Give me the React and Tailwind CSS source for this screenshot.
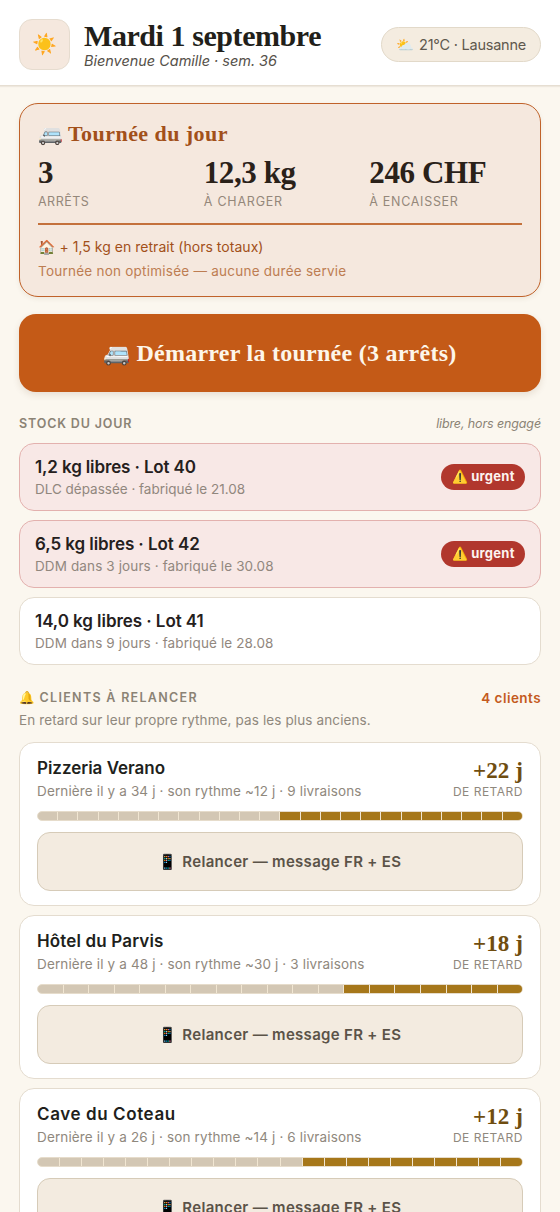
import React from "react";
import clsx from "clsx";

const stats = [
  { value: "3", label: "ARRÊTS", tracking: "tracking-[0.5px]" },
  { value: "12,3 kg", label: "À CHARGER", tracking: "tracking-[0.8px]" },
  { value: "246 CHF", label: "À ENCAISSER", tracking: "tracking-[0.7px]" },
];

const lots = [
  { title: "1,2 kg libres · Lot 40", detail: "DLC dépassée · fabriqué le 21.08", urgent: true, titleClass: "tracking-[-0.13px]", detailClass: "tracking-[-0.01px]" },
  { title: "6,5 kg libres · Lot 42", detail: "DDM dans 3 jours · fabriqué le 30.08", urgent: true, titleClass: "tracking-[-0.07px]", detailClass: "tracking-[0.12px]" },
  { title: "14,0 kg libres · Lot 41", detail: "DDM dans 9 jours · fabriqué le 28.08", urgent: false, titleClass: "tracking-[-0.06px]", detailClass: "tracking-[0.12px]" },
];

const clients = [
  { name: "Pizzeria Verano", last: 34, rhythm: 12, deliveries: 9, late: 22, onTimeCells: 12, lateCells: 12, nameClass: "tracking-[-0.02px]" },
  { name: "Hôtel du Parvis", last: 48, rhythm: 30, deliveries: 3, late: 18, onTimeCells: 12, lateCells: 7, nameClass: "tracking-[0.15px]" },
  { name: "Cave du Coteau", last: 26, rhythm: 14, deliveries: 6, late: 12, onTimeCells: 12, lateCells: 10, nameClass: "tracking-[0.6px]" },
];

const Header = () => (
  <header className="flex h-[86px] shrink-0 items-center justify-between border-b border-[#e6ded2] bg-white px-[19px] pt-[3px] shadow-[0_1px_1px_rgba(90,60,20,0.08)]">
    <div className="flex items-center gap-[14px]">
      <div className="flex size-[51px] items-center justify-center rounded-[13px] border border-[#e6dccf] bg-[#f5e8de] text-[20px]">☀️</div>
      <div className="flex flex-col pt-px">
        <h1 className="whitespace-nowrap font-['Liberation_Serif',serif] text-[30px] font-bold leading-[32px] tracking-[-0.43px] text-[#221f1a]">Mardi 1 septembre</h1>
        <p className="text-[14.5px] italic leading-[17px] tracking-[-0.03px] text-[#56514a]">Bienvenue Camille · sem. 36</p>
      </div>
    </div>
    <div className="flex h-[35px] w-[160px] items-center gap-[5px] whitespace-nowrap rounded-full border border-[#e2d9c9] bg-[#f4ece0] pl-[14px] pt-px text-[14.5px] text-[#5f584e]">
      <span>⛅</span>
      <span className="tracking-[-0.23px]">21°C · Lausanne</span>
    </div>
  </header>
);

const TourCard = () => (
  <section className="flex h-[194px] shrink-0 flex-col rounded-[19px] border border-[#c0622a] bg-[#f5e8de] px-[18px] pt-4 shadow-[0_2px_5px_rgba(90,60,20,0.08)]">
    <h2 className="flex items-center gap-[5px] font-['Liberation_Serif',serif] text-[22px] font-bold leading-7 text-[#a2501a]">
      <span className="text-[20px]">🚐</span>
      <span className="tracking-[0.45px]">Tournée du jour</span>
    </h2>
    <div className="mt-[9px] grid grid-cols-3 gap-[13px]">
      {stats.map((stat) => (
        <div key={stat.label}>
          <p className="font-['Liberation_Serif',serif] text-[31px] font-bold leading-8 tracking-[-0.39px] text-[#2a2119]">{stat.value}</p>
          <p className={clsx("mt-1 text-[12.5px] leading-[18px] text-[#94877a]", stat.tracking)}>{stat.label}</p>
        </div>
      ))}
    </div>
    <div className="mt-3 h-[2px] shrink-0 bg-[#c4713c]" />
    <p className="mt-[10px] flex items-center gap-1 text-[14px] leading-6 text-[#a2501a]">
      <span>🏠</span>
      <span className="tracking-[0.03px]">+ 1,5 kg en retrait (hors totaux)</span>
    </p>
    <p className="text-[13.5px] leading-6 tracking-[0.24px] text-[#bd7d52]">Tournée non optimisée — aucune durée servie</p>
  </section>
);

const LotCard = ({ lot }) => (
  <div className={clsx("flex h-[68px] items-center justify-between rounded-[15px] border px-[15px]", lot.urgent ? "border-[#e3b1ae] bg-[#f8e8e6]" : "border-[#e4dccf] bg-white")}>
    <div>
      <h3 className={clsx("pt-px text-[17px] font-semibold leading-[23px] text-[#25201d]", lot.titleClass)}>{lot.title}</h3>
      <p className={clsx("text-[13.5px] leading-5 text-[#91877e]", lot.detailClass)}>{lot.detail}</p>
    </div>
    {lot.urgent && (
      <span className="flex h-[26px] w-[84px] items-center gap-[3px] rounded-full bg-[#b1372d] pl-[11px] text-[13px] font-bold text-[#fdf3f0]">
        <span>⚠️</span>
        <span className="tracking-[0.27px]">urgent</span>
      </span>
    )}
  </div>
);

const RhythmBar = ({ onTimeCells, lateCells }) => (
  <div className="mt-[10px] flex h-[10px] gap-px overflow-hidden rounded-full border border-[#e6dccb] bg-[#f1e6d2]">
    {Array.from({ length: onTimeCells + lateCells }, (_, index) => (
      <div key={index} className={clsx("flex-1", index < onTimeCells ? "bg-[#d3c7b4]" : "bg-[#a6771a]")} />
    ))}
  </div>
);

const ClientCard = ({ client }) => (
  <div className="h-[164px] shrink-0 rounded-[15px] border border-[#e4dccf] bg-white px-[17px] pt-[13px]">
    <div className="flex h-[45px] justify-between">
      <div>
        <h3 className={clsx("text-[17px] font-semibold leading-6 text-[#211f1c]", client.nameClass)}>{client.name}</h3>
        <p className="text-[13.5px] leading-[22px] tracking-[0.14px] text-[#8f887d]">
          Dernière il y a {client.last} j · son rythme ~{client.rhythm} j · {client.deliveries} livraisons
        </p>
      </div>
      <div className="pt-[3px] text-right">
        <p className="font-['Liberation_Serif',serif] text-[23px] font-bold leading-6 tracking-[0.1px] text-[#6f4d10]">+{client.late} j</p>
        <p className="text-[12px] leading-[18px] tracking-[0.5px] text-[#8f887d]">DE RETARD</p>
      </div>
    </div>
    <RhythmBar onTimeCells={client.onTimeCells} lateCells={client.lateCells} />
    <button className="mt-[11px] flex h-[59px] w-full items-center justify-center gap-[5px] rounded-[13px] border border-[#d6cbb8] bg-[#f3ebe0] pt-[2px] text-[15px] font-semibold text-[#5b5348]">
      <span>📱</span>
      <span className="tracking-[0.31px]">Relancer — message FR + ES</span>
    </button>
  </div>
);

export default function App() {
  return (
    <div className="flex h-screen flex-col overflow-hidden bg-[#fbf7ef] font-['Inter','Noto_Color_Emoji',sans-serif]">
      <Header />
      <main className="flex flex-col px-[19px] pt-[17px]">
        <TourCard />
        <button className="mt-[17px] flex h-[78px] shrink-0 items-center justify-center gap-[6px] rounded-[17px] bg-[#c45a17] font-['Liberation_Serif',serif] text-[24px] font-bold text-[#fdf6ea] shadow-[0_3px_7px_rgba(90,50,20,0.12)]">
          <span className="text-[22px]">🚐</span>
          <span className="tracking-[0.26px]">Démarrer la tournée (3 arrêts)</span>
        </button>

        <div className="mt-[22px] flex items-center justify-between leading-5 text-[#8b8375]">
          <h2 className="text-[12.5px] font-semibold tracking-[0.85px]">STOCK DU JOUR</h2>
          <p className="text-[12.5px] italic tracking-[-0.12px]">libre, hors engagé</p>
        </div>
        <div className="mt-[9px] flex flex-col gap-[9px]">
          {lots.map((lot) => (
            <LotCard key={lot.title} lot={lot} />
          ))}
        </div>

        <div className="mt-[23px] flex items-center justify-between leading-5">
          <h2 className="flex items-center gap-[5px] text-[12.5px] font-semibold text-[#8b8375]">
            <span>🔔</span>
            <span className="tracking-[1.3px]">CLIENTS À RELANCER</span>
          </h2>
          <span className="text-[13.5px] font-semibold tracking-[0.45px] text-[#c45a20]">4 clients</span>
        </div>
        <p className="mt-[2px] text-[13.5px] leading-5 tracking-[0.12px] text-[#8f887d]">En retard sur leur propre rythme, pas les plus anciens.</p>
        <div className="mt-3 flex flex-col gap-[9px]">
          {clients.map((client) => (
            <ClientCard key={client.name} client={client} />
          ))}
        </div>
      </main>
    </div>
  );
}
